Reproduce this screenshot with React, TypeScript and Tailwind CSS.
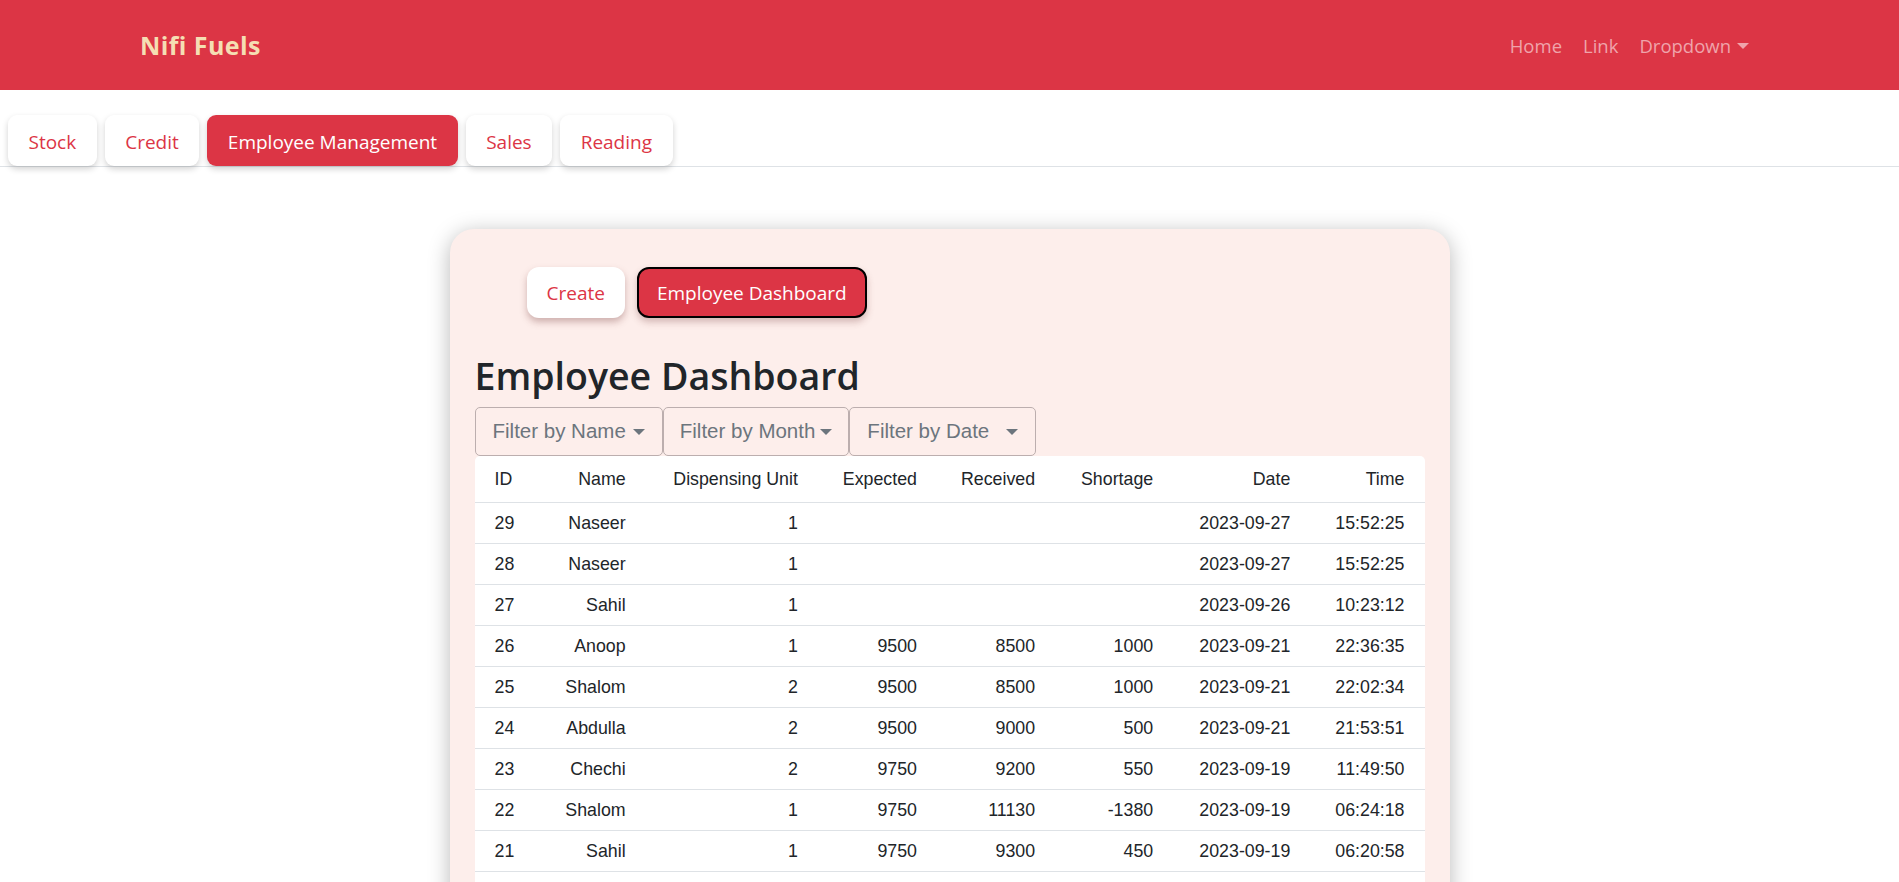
import { useState } from 'react'

type Row = {
    id: number
    name: string
    unit: number
    expected?: number
    received?: number
    shortage?: number
    date: string
    time: string
}

const rows: Row[] = [
    { id: 29, name: 'Naseer', unit: 1, date: '2023-09-27', time: '15:52:25' },
    { id: 28, name: 'Naseer', unit: 1, date: '2023-09-27', time: '15:52:25' },
    { id: 27, name: 'Sahil', unit: 1, date: '2023-09-26', time: '10:23:12' },
    { id: 26, name: 'Anoop', unit: 1, expected: 9500, received: 8500, shortage: 1000, date: '2023-09-21', time: '22:36:35' },
    { id: 25, name: 'Shalom', unit: 2, expected: 9500, received: 8500, shortage: 1000, date: '2023-09-21', time: '22:02:34' },
    { id: 24, name: 'Abdulla', unit: 2, expected: 9500, received: 9000, shortage: 500, date: '2023-09-21', time: '21:53:51' },
    { id: 23, name: 'Chechi', unit: 2, expected: 9750, received: 9200, shortage: 550, date: '2023-09-19', time: '11:49:50' },
    { id: 22, name: 'Shalom', unit: 1, expected: 9750, received: 11130, shortage: -1380, date: '2023-09-19', time: '06:24:18' },
    { id: 21, name: 'Sahil', unit: 1, expected: 9750, received: 9300, shortage: 450, date: '2023-09-19', time: '06:20:58' },
    { id: 20, name: 'Anoop', unit: 2, expected: 9750, received: 9500, shortage: 250, date: '2023-09-18', time: '21:14:07' },
]

const tabs = ['Stock', 'Credit', 'Employee Management', 'Sales', 'Reading']

const Caret = ({ className = '' }: { className?: string }) => (
    <span className={`inline-block w-0 h-0 border-x-[6px] border-x-transparent border-t-[6px] border-t-current ${className}`} />
)

const Navbar = () => (
    <nav className="h-[90px] pt-[2px] bg-[#dc3545] flex items-center justify-between pl-[140px] pr-[150px]">
        <a className="text-[25px] font-bold text-[#f5deb3] tracking-[0.4px]">Nifi Fuels</a>
        <div className="flex items-center gap-[21px] text-[18.5px] text-[#efa4ab]">
            <a>Home</a>
            <a>Link</a>
            <a className="flex items-center gap-[6px]">
                Dropdown
                <Caret />
            </a>
        </div>
    </nav>
)

const App = () => {
    const [active, setActive] = useState('Employee Management')

    return (
        <div className="min-h-screen bg-white font-['Segoe_UI','Open_Sans',sans-serif] text-[#212529]">
            <Navbar />

            <div className="flex gap-[8px] pl-[8px] pt-[25px] border-b border-[#dee2e6]">
                {tabs.map((t) => (
                    <button
                        key={t}
                        onClick={() => setActive(t)}
                        className={
                            active === t
                                ? 'h-[51px] px-[20.5px] pt-[3px] rounded-[9px] bg-[#dc3545] text-white text-[19px] shadow-[0_3px_6px_rgba(0,0,0,0.18)]'
                                : 'h-[51px] px-[20.5px] pt-[3px] rounded-[9px] bg-white text-[#dc3545] text-[19px] shadow-[0_3px_6px_rgba(0,0,0,0.18)]'
                        }
                    >
                        {t}
                    </button>
                ))}
            </div>

            <div className="w-[1000px] mx-auto mt-[62px] bg-[#fdeeeb] rounded-[24px] shadow-[0_4px_22px_rgba(0,0,0,0.28)] px-[25px] pt-[38px] pb-[40px]">
                <div className="flex gap-[12px] pl-[52px]">
                    <button className="h-[51px] px-[20px] pt-[2px] rounded-[12px] bg-white text-[#dc3545] text-[19px] shadow-[0_4px_7px_rgba(120,60,60,0.35)]">
                        Create
                    </button>
                    <button className="h-[51px] px-[18px] pt-[2px] rounded-[12px] bg-[#dc3545] text-white text-[19px] border-2 border-black shadow-[0_4px_7px_rgba(120,60,60,0.3)]">
                        Employee Dashboard
                    </button>
                </div>

                <h1 className="mt-[34px] mb-[7px] text-[37.5px] leading-[48px] font-semibold text-[#212529]">
                    Employee Dashboard
                </h1>

                <div className="flex font-['Liberation_Sans',Arial,sans-serif] text-[20.5px] text-[#6c757d] whitespace-nowrap">
                    <button className="h-[49px] px-[17px] flex items-center gap-[7px] border border-[#bcaeae] rounded-[5px]">
                        Filter by Name
                        <Caret />
                    </button>
                    <button className="h-[49px] px-[16px] flex items-center gap-[5px] border border-[#bcaeae] rounded-[5px]">
                        Filter by Month
                        <Caret />
                    </button>
                    <button className="w-[187px] h-[49px] pl-[17px] pr-[17px] flex items-center border border-[#bcaeae] rounded-[5px]">
                        Filter by Date
                        <Caret className="ml-auto" />
                    </button>
                </div>

                <div className="bg-white rounded-[5px] font-['Liberation_Sans',Arial,sans-serif] text-[17.8px] text-[#212529]">
                    <table className="w-full table-fixed border-collapse">
                        <colgroup>
                            <col className="w-[62px]" />
                            <col className="w-[97px]" />
                            <col className="w-[172px]" />
                            <col className="w-[119px]" />
                            <col className="w-[118px]" />
                            <col className="w-[118px]" />
                            <col className="w-[137px]" />
                            <col className="w-[126px]" />
                        </colgroup>
                        <thead>
                            <tr className="border-b border-[#dee2e6] leading-6">
                                <th className="pl-[20px] pr-2 py-[11px] text-left font-normal">ID</th>
                                <th className="px-2 py-[11px] text-right font-normal">Name</th>
                                <th className="px-2 py-[11px] text-right font-normal">Dispensing Unit</th>
                                <th className="px-2 py-[11px] text-right font-normal">Expected</th>
                                <th className="px-2 py-[11px] text-right font-normal">Received</th>
                                <th className="px-2 py-[11px] text-right font-normal">Shortage</th>
                                <th className="px-2 py-[11px] text-right font-normal">Date</th>
                                <th className="pl-2 pr-[20px] py-[11px] text-right font-normal">Time</th>
                            </tr>
                        </thead>
                        <tbody>
                            {rows.map((r) => (
                                <tr key={r.id} className="border-b border-[#dee2e6] leading-6">
                                    <td className="pl-[20px] pr-2 py-2 text-left">{r.id}</td>
                                    <td className="px-2 py-2 text-right">{r.name}</td>
                                    <td className="px-2 py-2 text-right">{r.unit}</td>
                                    <td className="px-2 py-2 text-right">{r.expected ?? ''}</td>
                                    <td className="px-2 py-2 text-right">{r.received ?? ''}</td>
                                    <td className="px-2 py-2 text-right">{r.shortage ?? ''}</td>
                                    <td className="px-2 py-2 text-right">{r.date}</td>
                                    <td className="pl-2 pr-[20px] py-2 text-right">{r.time}</td>
                                </tr>
                            ))}
                        </tbody>
                    </table>
                </div>
            </div>
        </div>
    )
}

export default App
